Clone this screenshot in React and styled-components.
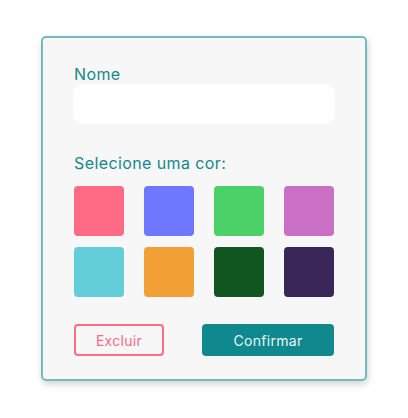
import React from "react";
import styled, { createGlobalStyle } from "styled-components";

const Global = createGlobalStyle`
  html, body { margin: 0; padding: 0; background: #ffffff; }
  body { font-family: "Inter", "Noto Sans", sans-serif; }
  * { box-sizing: border-box; }
`;

const Page = styled.div`
  width: 408px;
  height: 418px;
  display: flex;
  justify-content: center;
  align-items: flex-start;
  padding-top: 36px;
`;

const Card = styled.div`
  width: 326px;
  height: 345px;
  background: #f7f7f7;
  border: 2px solid #72bcc0;
  border-radius: 5px;
  box-shadow: 1px 3px 7px rgba(0, 0, 0, 0.18);
  padding: 26px 31px 0 31px;
  display: flex;
  flex-direction: column;
`;

const Label = styled.label`
  display: block;
  font-size: 16px;
  line-height: 20px;
  color: #15878c;
  font-weight: 400;
  letter-spacing: 0.4px;
`;

const Input = styled.input`
  display: block;
  width: calc(100% + 2px);
  margin: 0 -1px;
  height: 40px;
  border: none;
  outline: none;
  background: #ffffff;
  border-radius: 10px;
  padding: 0 12px;
  font-family: inherit;
  font-size: 14px;
`;

const Section = styled.div`
  margin-top: ${(p) => p.$top}px;
`;

const Grid = styled.div`
  display: grid;
  grid-template-columns: repeat(4, 50px);
  grid-auto-rows: 50px;
  column-gap: 20px;
  row-gap: 11px;
  margin-top: 13px;
`;

const Swatch = styled.button`
  border: none;
  padding: 0;
  margin: 0;
  width: 50px;
  height: 50px;
  border-radius: 4px;
  background: ${(p) => p.$color};
  cursor: pointer;
`;

const Actions = styled.div`
  display: flex;
  justify-content: space-between;
  margin-top: 27px;
`;

const Button = styled.button`
  height: 32px;
  width: ${(p) => p.$w}px;
  border-radius: 4px;
  font-family: inherit;
  font-size: 14px;
  letter-spacing: 0.3px;
  cursor: pointer;
  padding: 0;
  ${(p) =>
    p.$variant === "outline"
      ? `background: transparent; border: 2px solid #ff6b85; color: #ff6b85;`
      : `background: #0f898e; border: none; color: #eaf6f6;`}
`;

const colors = [
  "#ff6b85",
  "#6e78ff",
  "#4cd068",
  "#c970c4",
  "#63cdd9",
  "#f2a036",
  "#115520",
  "#3a2659",
];

export default function App() {
  return (
    <>
      <Global />
      <Page>
        <Card>
          <Label htmlFor="nome">Nome</Label>
          <Input id="nome" type="text" />
          <Section $top={29}>
            <Label>Selecione uma cor:</Label>
            <Grid>
              {colors.map((c) => (
                <Swatch key={c} $color={c} aria-label={c} />
              ))}
            </Grid>
          </Section>
          <Actions>
            <Button $variant="outline" $w={90}>Excluir</Button>
            <Button $variant="solid" $w={132}>Confirmar</Button>
          </Actions>
        </Card>
      </Page>
    </>
  );
}
